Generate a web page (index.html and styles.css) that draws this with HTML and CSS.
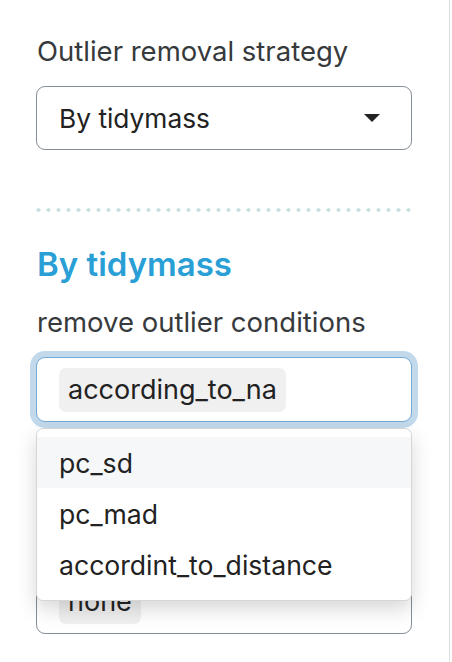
FILE: index.html
```html
<!DOCTYPE html>
<html lang="en">
<head>
<meta charset="utf-8">
<title>Outlier removal</title>
<link rel="stylesheet" href="styles.css">
</head>
<body>
<aside class="sidebar">
  <div class="form-group first">
    <label class="control-label">Outlier removal strategy</label>
    <div class="select-box">
      <span class="select-value">By tidymass</span>
      <span class="caret"></span>
    </div>
  </div>
  <hr class="dotted">
  <h4 class="section-title">By tidymass</h4>
  <div class="form-group">
    <label class="control-label">remove outlier conditions</label>
    <div class="multi-wrap">
      <div class="multi-input focused">
        <span class="chip">according_to_na</span>
      </div>
      <ul class="dropdown">
        <li class="option active">pc_sd</li>
        <li class="option">pc_mad</li>
        <li class="option">accordint_to_distance</li>
      </ul>
    </div>
  </div>
  <div class="form-group second">
    <div class="multi-input">
      <span class="chip">none</span>
    </div>
  </div>
</aside>
</body>
</html>
```
FILE: styles.css
```css
html, body {
  margin: 0;
  padding: 0;
  background: #ffffff;
}
body {
  font-family: Inter, "Noto Sans", "Liberation Sans", sans-serif;
  color: #373a3c;
}
.sidebar {
  width: 450px;
  height: 662px;
  box-sizing: border-box;
  border-right: 1px solid #dee2e6;
  padding: 30px 37px 0 36px;
  overflow: hidden;
}
.form-group {
  display: flex;
  flex-direction: column;
}
.control-label {
  font-size: 27.5px;
  line-height: 42px;
  color: #373a3c;
  padding-left: 1px;
  margin-bottom: 14px;
}
.select-box {
  height: 64px;
  box-sizing: border-box;
  border: 1px solid #858d96;
  border-radius: 9px;
  display: flex;
  align-items: center;
  justify-content: space-between;
  padding: 0 31px 0 22px;
  font-size: 26.3px;
  color: #222;
}
.caret {
  width: 0;
  height: 0;
  border-left: 8px solid transparent;
  border-right: 8px solid transparent;
  border-top: 8px solid #222;
}
.dotted {
  border: 0;
  height: 4px;
  margin: 58px 0 0 0;
  background-image: radial-gradient(circle, #c8dfdf 1.8px, transparent 2.1px);
  background-size: 10px 4px;
  background-position: -2.5px 0;
}
.section-title {
  margin: 30px 0 0 0;
  font-size: 33px;
  font-weight: 600;
  color: #2a9fd6;
  line-height: 44px;
  padding-left: 1px;
}
.section-title + .form-group .control-label {
  margin-top: 15px;
  margin-bottom: 14px;
}
.multi-wrap {
  position: relative;
}
.multi-input {
  height: 65px;
  box-sizing: border-box;
  border: 1px solid #858d96;
  border-radius: 9px;
  display: flex;
  align-items: center;
  padding: 0 22px;
  background: #fff;
}
.multi-input.focused {
  border-color: #74aad8;
  box-shadow: 0 0 0 6px #c2d9ec;
}
.chip {
  background: #f0f0f0;
  border-radius: 7px;
  height: 44px;
  display: flex;
  align-items: center;
  padding: 0 9px;
  font-size: 27px;
  color: #222;
}
.dropdown {
  position: absolute;
  left: 0;
  right: 0;
  top: 71px;
  margin: 0;
  padding: 8px 0 10px 0;
  list-style: none;
  background: #fff;
  border: 1px solid #d6d6d6;
  border-radius: 7px;
  box-shadow: 0 8px 20px rgba(0, 0, 0, 0.16);
  z-index: 5;
}
.option {
  height: 51px;
  display: flex;
  align-items: center;
  padding-left: 22px;
  font-size: 26.6px;
  color: #222;
}
.option.active {
  background: #f6f7f9;
}
.second {
  margin-top: 147px;
}
```
